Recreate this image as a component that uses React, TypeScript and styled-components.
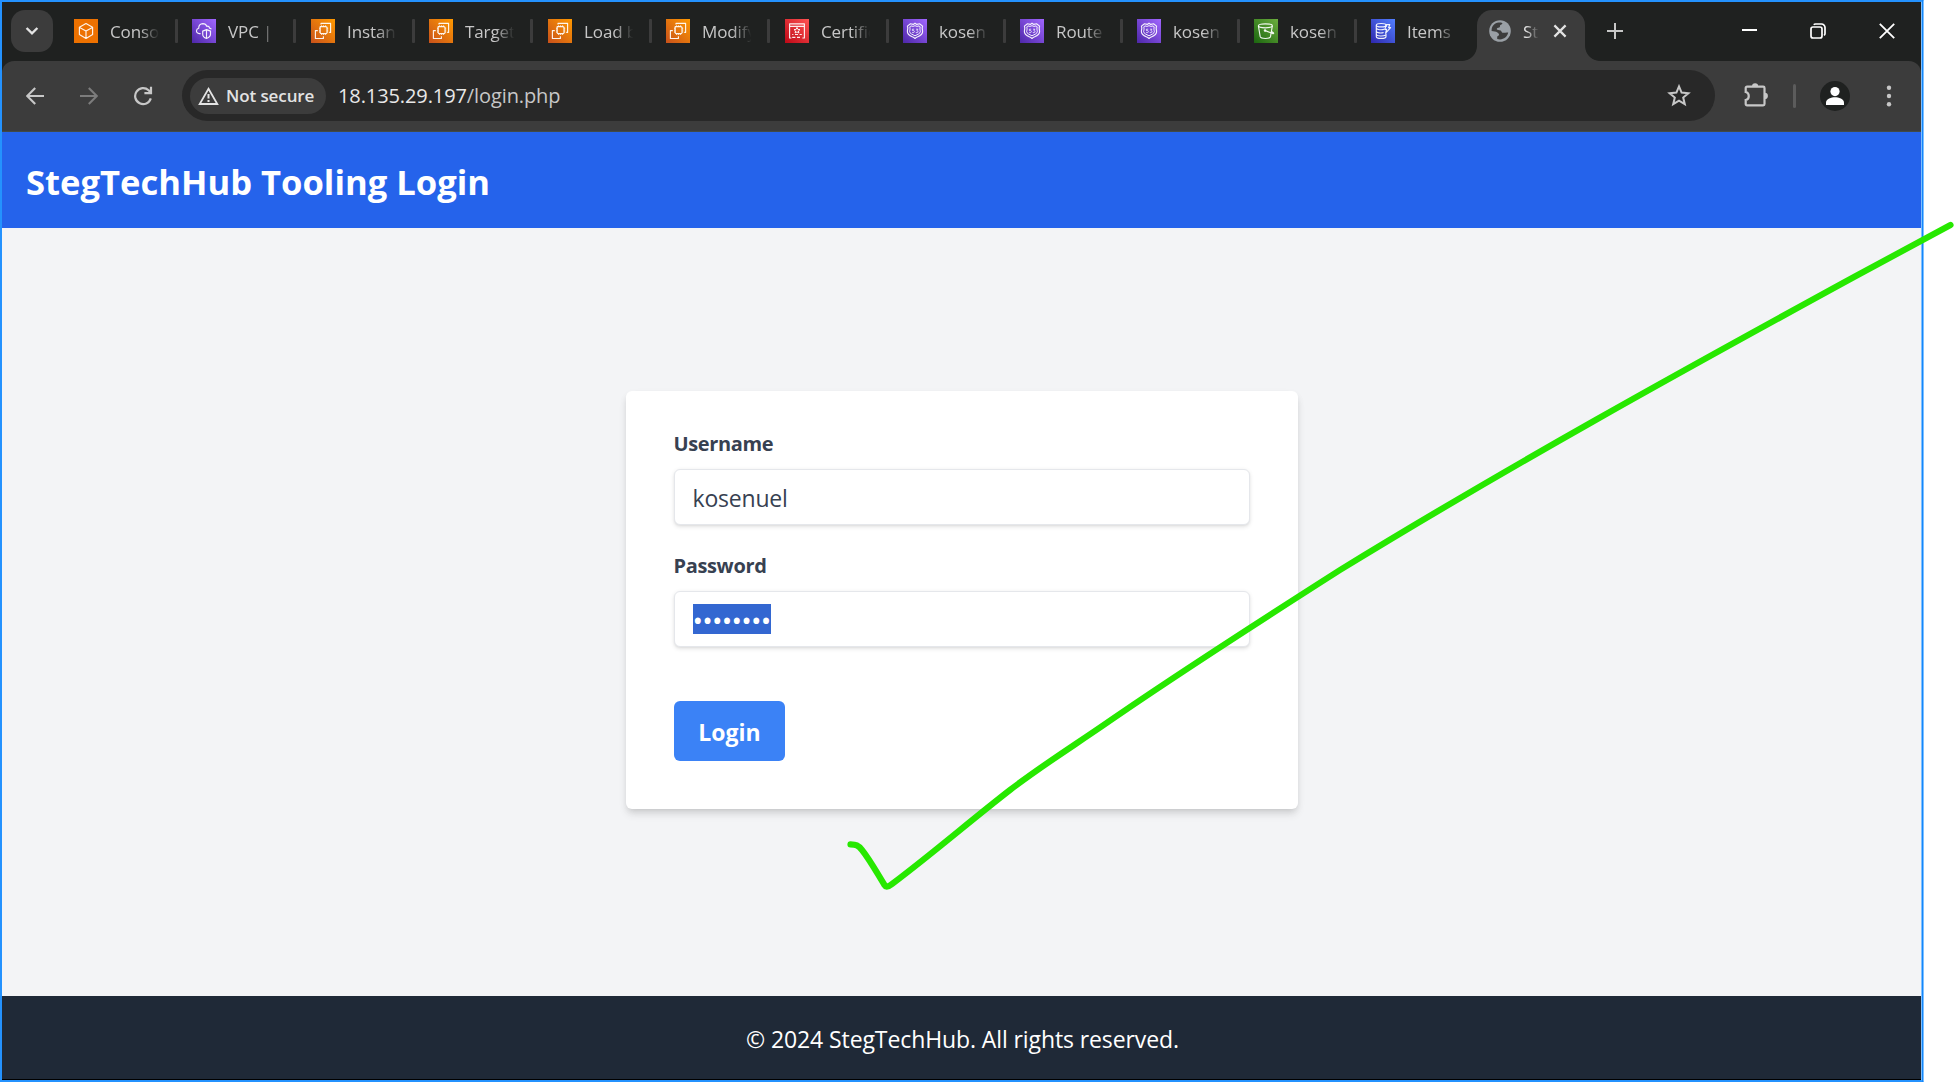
import React from "react";
import styled, { createGlobalStyle, css } from "styled-components";

const uiFont = `"Open Sans", "Noto Sans", "Liberation Sans", sans-serif`;

const GlobalStyle = createGlobalStyle`
  *, *::before, *::after { box-sizing: border-box; }
  html, body { margin: 0; padding: 0; background: #ffffff; }
  body { font-family: ${uiFont}; overflow: hidden; }
`;

const Canvas = styled.div`
  position: relative;
  width: 1954px;
  height: 1082px;
  background: #ffffff;
`;

const WindowFrame = styled.div`
  width: 1924px;
  height: 1082px;
  display: flex;
  flex-direction: column;
  background: #1f2120;
  border: 2px solid #2492fe;
  border-right: 3px solid #7fc0ff;
`;

const FrameEdge = styled.div`
  position: absolute;
  top: 0;
  right: 31px;
  width: 1px;
  height: 1082px;
  background: #1487fb;
`;

const TabStrip = styled.div`
  height: 59px;
  flex: none;
  display: flex;
  align-items: flex-start;
  padding: 8px 0 0 9px;
  background: #1f2120;
`;

const TabSearch = styled.div`
  width: 42px;
  height: 42px;
  margin-right: 21px;
  border-radius: 14px;
  background: #3c3c3c;
  display: flex;
  align-items: center;
  justify-content: center;
`;

const Tab = styled.div<{ $width: number }>`
  width: ${(p) => p.$width}px;
  height: 42px;
  flex: none;
  display: flex;
  align-items: center;
`;

const TabTitle = styled.span<{ $active?: boolean }>`
  width: ${(p) => (p.$active ? 16 : 52)}px;
  margin-left: 12px;
  overflow: hidden;
  white-space: nowrap;
  font-size: 17px;
  line-height: 24px;
  padding-top: 2px;
  letter-spacing: -0.1px;
  color: ${(p) => (p.$active ? "#e3e3e3" : "#c7c7c7")};
  mask-image: linear-gradient(
    to right,
    #000 ${(p) => (p.$active ? "20%" : "58%")},
    transparent ${(p) => (p.$active ? "98%" : "95%")}
  );
`;

const TabDivider = styled.i<{ $tight?: boolean }>`
  width: 3px;
  height: 24px;
  margin-left: ${(p) => (p.$tight ? 12 : 13)}px;
  border-radius: 1px;
  background: #3c3c3c;
`;

const flare = css`
  content: "";
  position: absolute;
  bottom: 0;
  width: 15px;
  height: 15px;
`;

const ActiveTab = styled.div`
  position: relative;
  width: 108px;
  height: 51px;
  margin-left: -12px;
  padding: 0 0 9px 12px;
  flex: none;
  display: flex;
  align-items: center;
  border-radius: 15px 15px 0 0;
  background: #3c3c3c;

  &::before {
    ${flare}
    left: -15px;
    background: radial-gradient(circle at 0 0, transparent 14.5px, #3c3c3c 15.3px);
  }
  &::after {
    ${flare}
    right: -15px;
    background: radial-gradient(circle at 100% 0, transparent 14.5px, #3c3c3c 15.3px);
  }
`;

const TabClose = styled.div`
  display: flex;
  margin-left: 14px;
`;

const NewTab = styled.div`
  height: 42px;
  margin-left: 22px;
  display: flex;
  align-items: center;
`;

const WindowControls = styled.div`
  height: 42px;
  margin-left: auto;
  padding-right: 26px;
  display: flex;
  align-items: center;
  gap: 53px;
`;

const Toolbar = styled.div`
  height: 71px;
  flex: none;
  display: flex;
  align-items: center;
  padding: 0 28px 1px 20px;
  border-radius: 12px 12px 0 0;
  background: #3c3c3c;
  border-bottom: 1px solid #414a46;
`;

const NavButton = styled.div<{ $dim?: boolean }>`
  width: 26px;
  height: 26px;
  margin-right: 28px;
  display: flex;
  align-items: center;
  justify-content: center;
  color: ${(p) => (p.$dim ? "#7c7c7c" : "#c7c7c7")};
`;

const AddressBar = styled.div`
  width: 1533px;
  height: 51px;
  flex: none;
  margin-left: -2px;
  padding: 0 24px 0 8px;
  display: flex;
  align-items: center;
  border-radius: 26px;
  background: #282828;
`;

const SecurityChip = styled.div`
  width: 136px;
  height: 36px;
  display: flex;
  align-items: center;
  padding-left: 8px;
  gap: 7px;
  border-radius: 18px;
  background: #3c3c3c;
  color: #e3e3e3;
  font-size: 17px;
  font-weight: 600;
  letter-spacing: -0.1px;
  white-space: nowrap;
`;

const Address = styled.span`
  margin-left: 12px;
  font-size: 20px;
  line-height: 30px;
  letter-spacing: -0.1px;
  color: #c7c7c7;
`;

const Host = styled.span`
  color: #e8e8e8;
`;

const BookmarkSlot = styled.div`
  margin-left: auto;
  display: flex;
`;

const ToolbarActions = styled.div`
  flex: 1;
  display: flex;
  align-items: center;
  justify-content: flex-end;
`;

const ToolbarDivider = styled.i`
  width: 3px;
  height: 24px;
  margin: 0 24px;
  border-radius: 2px;
  background: #5c5c5c;
`;

const Avatar = styled.div`
  width: 30px;
  height: 30px;
  margin-right: 35px;
  border-radius: 50%;
  background: #1f2120;
  display: flex;
  align-items: center;
  justify-content: center;
`;

const PageHeader = styled.header`
  height: 96px;
  flex: none;
  padding: 24px;
  background: #2563eb;
`;

const PageTitle = styled.h1`
  margin: 0;
  padding-top: 2px;
  font-size: 34.6px;
  line-height: 48px;
  font-weight: 700;
  color: #ffffff;
`;

const Main = styled.main`
  flex: 1;
  display: flex;
  align-items: center;
  justify-content: center;
  background: #f3f4f6;
`;

const LoginCard = styled.form`
  width: 672px;
  margin: 0 0 24px;
  padding: 36px 48px 48px;
  border-radius: 6px;
  background: #ffffff;
  box-shadow: 0 6px 9px -1.5px rgba(0, 0, 0, 0.1), 0 3px 6px -3px rgba(0, 0, 0, 0.1),
    0 3px 9px rgba(0, 0, 0, 0.04);
`;

const Field = styled.div<{ $last?: boolean }>`
  margin-bottom: ${(p) => (p.$last ? 54 : 24)}px;
`;

const FieldLabel = styled.label`
  display: block;
  height: 30px;
  margin-bottom: 12px;
  font-size: 20px;
  line-height: 34px;
  font-weight: 700;
  letter-spacing: -0.35px;
  color: #374151;
`;

const FieldBox = styled.div`
  height: 56px;
  padding: 12px 18px;
  display: flex;
  align-items: center;
  border: 1px solid #e5e7eb;
  border-radius: 6px;
  background: #ffffff;
  box-shadow: 0 1.5px 4.5px rgba(0, 0, 0, 0.1), 0 1.5px 3px -1.5px rgba(0, 0, 0, 0.1);
  font-size: 23px;
  line-height: 30px;
  letter-spacing: -0.2px;
  color: #374151;
`;

const TypedText = styled.span`
  padding-top: 2px;
`;

const SelectedText = styled.span`
  width: 78px;
  height: 30px;
  margin-top: -1px;
  background: #3367d1;
  color: #ffffff;
  font-size: 28px;
  letter-spacing: -0.78px;
  line-height: 33px;
  white-space: nowrap;
`;

const SubmitButton = styled.button`
  display: block;
  height: 60px;
  width: 111px;
  padding: 2px 0 0 1px;
  border: 0;
  border-radius: 6px;
  background: #3b82f6;
  color: #ffffff;
  font-family: ${uiFont};
  font-size: 23px;
  line-height: 36px;
  font-weight: 700;
`;

const PageFooter = styled.footer`
  height: 84px;
  flex: none;
  padding: 25px 0 0 2px;
  text-align: center;
  font-size: 23px;
  line-height: 36px;
  letter-spacing: -0.1px;
  color: #ffffff;
  background: #1f2937;
  border-bottom: 1px solid #000000;
`;

const Annotation = styled.svg`
  position: absolute;
  left: 0;
  top: 0;
  pointer-events: none;
`;

type ServiceKind = "console" | "vpc" | "ec2" | "acm" | "route53" | "s3" | "dynamo";

const gradients: Record<ServiceKind, [string, string]> = {
  console: ["#ed7100", "#ed7100"],
  vpc: ["#4d27a8", "#a166ff"],
  ec2: ["#c8511b", "#ff9900"],
  acm: ["#bd0816", "#ff5252"],
  route53: ["#4d27a8", "#a166ff"],
  s3: ["#1b660f", "#6cae3e"],
  dynamo: ["#2e27ad", "#527fff"],
};

const glyphs: Record<ServiceKind, React.ReactNode> = {
  console: (
    <path d="M12 4.6 18.6 8.2V15.6L12 19.4 5.4 15.6V8.2ZM5.6 8.4 12 11.9 18.4 8.4M12 11.9V19.2" />
  ),
  vpc: (
    <>
      <path d="M8.6 14.6H7.4C5.3 14.6 4.4 13.2 4.5 11.7 4.6 10.3 5.5 9.4 6.7 9.2 6.7 6.6 8.4 4.7 10.9 4.6 12.8 4.6 14.2 5.7 14.8 7.4 16.2 6.7 17.4 7.6 17.5 9.1 18.4 9.3 19 9.7 19.4 10.3" />
      <path d="M14.5 10.6 18.5 12.1V15.3C18.5 17.3 17 18.6 14.5 19.5 12 18.6 10.7 17.3 10.7 15.3V12.1ZM14.5 10.8V19.2" />
    </>
  ),
  ec2: (
    <>
      <path d="M9.2 7.6H14.8A1.2 1.2 0 0 1 16 8.8V13.4A1.2 1.2 0 0 1 14.8 14.6H10.4A1.2 1.2 0 0 1 9.2 13.4Z" />
      <path
        d="M10.6 6.4V7.4M12.6 6.4V7.4M14.6 6.4V7.4M10.6 14.8V15.8M12.6 14.8V15.8M14.6 14.8V15.8M8 9.2H9M8 11.1H9M8 13H9M16.2 9.2H17.2M16.2 11.1H17.2M16.2 13H17.2"
        strokeWidth="1"
      />
      <path d="M10 5.6V4.4H19.6V13.4H18.2M6.8 11.6H4.4V19.5H12.4V17.2" />
    </>
  ),
  acm: (
    <>
      <path d="M6.4 19H4.6V4.8H19.4V19H17.4M4.8 7.3H19.2" />
      <path
        d="M12 8.4 12.9 10.4 15 10.6 13.4 12 13.9 14 12 12.9 10.1 14 10.6 12 9 10.6 11.1 10.4Z"
        strokeWidth="1"
      />
      <path d="M7.2 15.5H8.4M10 15.5H13M14.6 15.5H16.8M7.2 18.4H10.4M12 18.4H15" />
    </>
  ),
  route53: (
    <>
      <path d="M12 4.2 13.8 5.4 16.5 4.8 19.6 7.1C18.7 9.1 19 10.6 19.6 12.3 20 15.8 16.8 17 14.2 18 13.3 18.4 12.7 18.9 12 19.5 11.3 18.9 10.7 18.4 9.8 18 7.2 17 4 15.8 4.4 12.3 5 10.6 5.3 9.1 4.4 7.1L7.5 4.8 10.2 5.4Z" />
      <path
        d="M12 6.7 14 7.4 16.2 6.9 17.2 8C16.7 9.6 17 11 17.4 12.4 17.5 14.5 14.6 15.4 12 16.8 9.4 15.4 6.5 14.5 6.6 12.4 7 11 7.3 9.6 6.8 8L7.8 6.9 10 7.4Z"
        strokeWidth="1"
      />
      <path
        d="M11.2 10.2H9.4V11.6H10.5C11.8 11.6 11.8 13.6 10.3 13.6H9.1M13 10.2H14.9L13.9 11.5C15.4 11.7 15.2 13.6 14 13.6H12.8"
        strokeWidth=".8"
      />
    </>
  ),
  s3: (
    <>
      <ellipse cx="11.4" cy="6.8" rx="7" ry="2" />
      <path d="M4.4 7 6.2 17.7C6.6 19 9 19.5 11.4 19.5S16.2 19 16.5 17.7L18.3 7" />
      <path d="M11.2 11.6 18.4 14.4C19.8 15 20.2 14 18.8 13.2L17.5 12.5" />
      <circle cx="11" cy="11.5" r=".7" />
    </>
  ),
  dynamo: (
    <>
      <ellipse cx="10.2" cy="6.2" rx="4.9" ry="1.7" />
      <path d="M5.3 6.4V17.4C5.3 18.6 7.4 19.4 10.2 19.4S15 18.6 15 17.4V14.5M15.1 6.4V8M5.4 9.4C6.3 10.8 10.6 11.2 13.2 10.3M5.4 12.6C6.3 14 10 14.4 12.6 13.5M5.4 15.8C6.3 17.2 12 17.6 14.9 16" />
      <path d="M15.4 5.6H18.8L17.6 8.6H19.6L14.6 14.2 15.6 10.4H13.8Z" />
    </>
  ),
};

function ServiceIcon({ kind, id }: { kind: ServiceKind; id: string }) {
  const [from, to] = gradients[kind];
  return (
    <svg width="24" height="24" viewBox="0 0 24 24">
      <defs>
        <linearGradient id={id} x1="0" y1="1" x2="1" y2="0">
          <stop offset="0" stopColor={from} />
          <stop offset="1" stopColor={to} />
        </linearGradient>
      </defs>
      <rect width="24" height="24" fill={`url(#${id})`} />
      <g fill="none" stroke="#ffffff" strokeOpacity="0.92" strokeWidth="1.15" strokeLinejoin="round">
        {glyphs[kind]}
      </g>
    </svg>
  );
}

const tabs: { kind: ServiceKind; title: string; width: number; tight?: boolean }[] = [
  { kind: "console", title: "Conso", width: 118 },
  { kind: "vpc", title: "VPC | c", width: 119 },
  { kind: "ec2", title: "Instan", width: 118 },
  { kind: "ec2", title: "Target", width: 119 },
  { kind: "ec2", title: "Load b", width: 118 },
  { kind: "ec2", title: "Modify", width: 119 },
  { kind: "acm", title: "Certific", width: 118 },
  { kind: "route53", title: "kosen", width: 117, tight: true },
  { kind: "route53", title: "Route", width: 117, tight: true },
  { kind: "route53", title: "kosen", width: 117, tight: true },
  { kind: "s3", title: "kosen", width: 117, tight: true },
  { kind: "dynamo", title: "Items", width: 118 },
];

function BrowserTabs() {
  return (
    <TabStrip>
      <TabSearch>
        <svg width="14" height="10" viewBox="0 0 14 10" fill="none" stroke="#e3e3e3" strokeWidth="2.4">
          <path d="M1.6 2 7 7.4 12.4 2" />
        </svg>
      </TabSearch>
      {tabs.map((tab, i) => (
        <Tab key={i} $width={tab.width}>
          <ServiceIcon kind={tab.kind} id={`tile${i}`} />
          <TabTitle>{tab.title}</TabTitle>
          {i < tabs.length - 1 && <TabDivider $tight={tab.tight} />}
        </Tab>
      ))}
      <ActiveTab>
        <svg width="22" height="22" viewBox="0 0 22 22">
          <circle cx="11" cy="11" r="10.8" fill="#9aa0a6" />
          <path
            d="M2.6 10.2C2.7 6.2 5.6 3 9.6 2.6 12 2.4 13.2 2.8 13.4 3.4 13.5 4.3 11.3 4.6 11 5.6 10.8 6.5 11.4 7 10.3 7.4 8.7 7.7 7.8 8 7.8 9.2 8 10.4 10.2 9.8 11.6 10.4 12.7 11 12.5 12.3 13.4 12.7 15 13.2 17 12.1 19.2 12.6 18.4 16.6 15 19.4 11 19.4 9.9 19.4 9 19.2 8.2 18.9V17C8.2 16 9.8 16 10 15.1 10.2 14 9.5 13.2 8.4 12.5 7 11.4 4.6 11.2 2.6 11Z"
            fill="#3c3c3c"
          />
        </svg>
        <TabTitle $active>St</TabTitle>
        <TabClose>
          <svg width="14" height="14" viewBox="0 0 14 14" stroke="#e3e3e3" strokeWidth="2.2">
            <path d="M1.4 1.4 12.6 12.6M12.6 1.4 1.4 12.6" />
          </svg>
        </TabClose>
      </ActiveTab>
      <NewTab>
        <svg width="16" height="16" viewBox="0 0 16 16" stroke="#c7c7c7" strokeWidth="2">
          <path d="M8 0V16M0 8H16" />
        </svg>
      </NewTab>
      <WindowControls>
        <svg width="16" height="16" viewBox="0 0 16 16" stroke="#ffffff" strokeWidth="2">
          <path d="M1 7H16" />
        </svg>
        <svg width="16" height="16" viewBox="0 0 16 16" fill="none" stroke="#ffffff" strokeWidth="1.7">
          <rect x="1" y="4" width="11" height="11" rx="2" />
          <path d="M3.8 1.8C4.2 1.2 4.8 1 5.5 1H11.5A3.5 3.5 0 0 1 15 4.5V10.5C15 11.3 14.6 12 14 12.4" />
        </svg>
        <svg width="16" height="16" viewBox="0 0 16 16" stroke="#ffffff" strokeWidth="1.8">
          <path d="M.8 .8 15.2 15.2M15.2 .8 .8 15.2" />
        </svg>
      </WindowControls>
    </TabStrip>
  );
}

function BrowserToolbar() {
  return (
    <Toolbar>
      <NavButton>
        <svg width="18" height="18" viewBox="0 0 18 18" fill="none" stroke="currentColor" strokeWidth="2.1">
          <path d="M18 9H1.5M9.2 .9 1.2 9 9.2 17.1" />
        </svg>
      </NavButton>
      <NavButton $dim>
        <svg width="18" height="18" viewBox="0 0 18 18" fill="none" stroke="currentColor" strokeWidth="2.1">
          <path d="M0 9H16.5M8.8 .9 16.8 9 8.8 17.1" />
        </svg>
      </NavButton>
      <NavButton>
        <svg width="20" height="20" viewBox="0 0 20 20" fill="none" stroke="currentColor" strokeWidth="2.2">
          <path d="M17.8 12.4A8 8 0 1 1 15.6 4.2L17.6 6.4M18 .8V7.2H11.4" />
        </svg>
      </NavButton>
      <AddressBar>
        <SecurityChip>
          <svg width="21" height="18" viewBox="0 0 21 18" fill="none" stroke="#e3e3e3" strokeWidth="1.8">
            <path d="M10.5 1.8 19.3 17H1.7Z" />
            <path d="M10.5 7V11.6M10.5 13V15" strokeWidth="2" />
          </svg>
          Not secure
        </SecurityChip>
        <Address>
          <Host>18.135.29.197</Host>/login.php
        </Address>
        <BookmarkSlot>
          <svg width="24" height="23" viewBox="0 0 24 23" fill="none" stroke="#c7c7c7" strokeWidth="2">
            <path d="M12 2.4 14.6 8.6 21.4 9.2 16.2 13.6 17.8 20.2 12 16.7 6.2 20.2 7.8 13.6 2.6 9.2 9.4 8.6Z" />
          </svg>
        </BookmarkSlot>
      </AddressBar>
      <ToolbarActions>
        <svg width="26" height="26" viewBox="0 0 26 26">
          <path
            d="M4 3.6H20.2A1.3 1.3 0 0 1 21.5 4.9V21.1A1.3 1.3 0 0 1 20.2 22.4H4A1.3 1.3 0 0 1 2.7 21.1V17C6.8 16.2 6.8 9.8 2.7 9V4.9A1.3 1.3 0 0 1 4 3.6Z"
            fill="none"
            stroke="#c7c7c7"
            strokeWidth="2.2"
          />
          <path d="M9 3.4A3.1 3.1 0 0 1 15.2 3.4ZM21.8 9.8A3.1 3.1 0 0 1 21.8 16Z" fill="#c7c7c7" />
        </svg>
        <ToolbarDivider />
        <Avatar>
          <svg width="20" height="20" viewBox="0 0 20 20" fill="#ffffff">
            <circle cx="10" cy="5.6" r="4.6" />
            <path d="M1 19V16.6C1 13 6.4 11.3 10 11.3S19 13 19 16.6V19Z" />
          </svg>
        </Avatar>
        <svg width="8" height="24" viewBox="0 0 8 24" fill="#c7c7c7">
          <circle cx="4" cy="3.8" r="2.2" />
          <circle cx="4" cy="12" r="2.2" />
          <circle cx="4" cy="20.2" r="2.2" />
        </svg>
      </ToolbarActions>
    </Toolbar>
  );
}

export default function App() {
  return (
    <Canvas>
      <GlobalStyle />
      <WindowFrame>
        <BrowserTabs />
        <BrowserToolbar />
        <PageHeader>
          <PageTitle>StegTechHub Tooling Login</PageTitle>
        </PageHeader>
        <Main>
          <LoginCard>
            <Field>
              <FieldLabel>Username</FieldLabel>
              <FieldBox>
                <TypedText>kosenuel</TypedText>
              </FieldBox>
            </Field>
            <Field $last>
              <FieldLabel>Password</FieldLabel>
              <FieldBox>
                <SelectedText>••••••••</SelectedText>
              </FieldBox>
            </Field>
            <SubmitButton type="button">Login</SubmitButton>
          </LoginCard>
        </Main>
        <PageFooter>© 2024 StegTechHub. All rights reserved.</PageFooter>
      </WindowFrame>
      <FrameEdge />
      <Annotation width="1954" height="1082" viewBox="0 0 1954 1082">
        <path
          d="M850.5 844.3C856 844.6 858 845 862 850 870 860 877 873 884.5 885 886 887.5 888 887 892 884 932 854 970 821 1010 790 1040 767 1070 748 1100 727.5C1180 672 1260 621 1340 570 1508 467 1680 372 1854 277L1950.5 225"
          fill="none"
          stroke="#27e800"
          strokeWidth="6.2"
          strokeLinecap="round"
          strokeLinejoin="round"
        />
      </Annotation>
    </Canvas>
  );
}
